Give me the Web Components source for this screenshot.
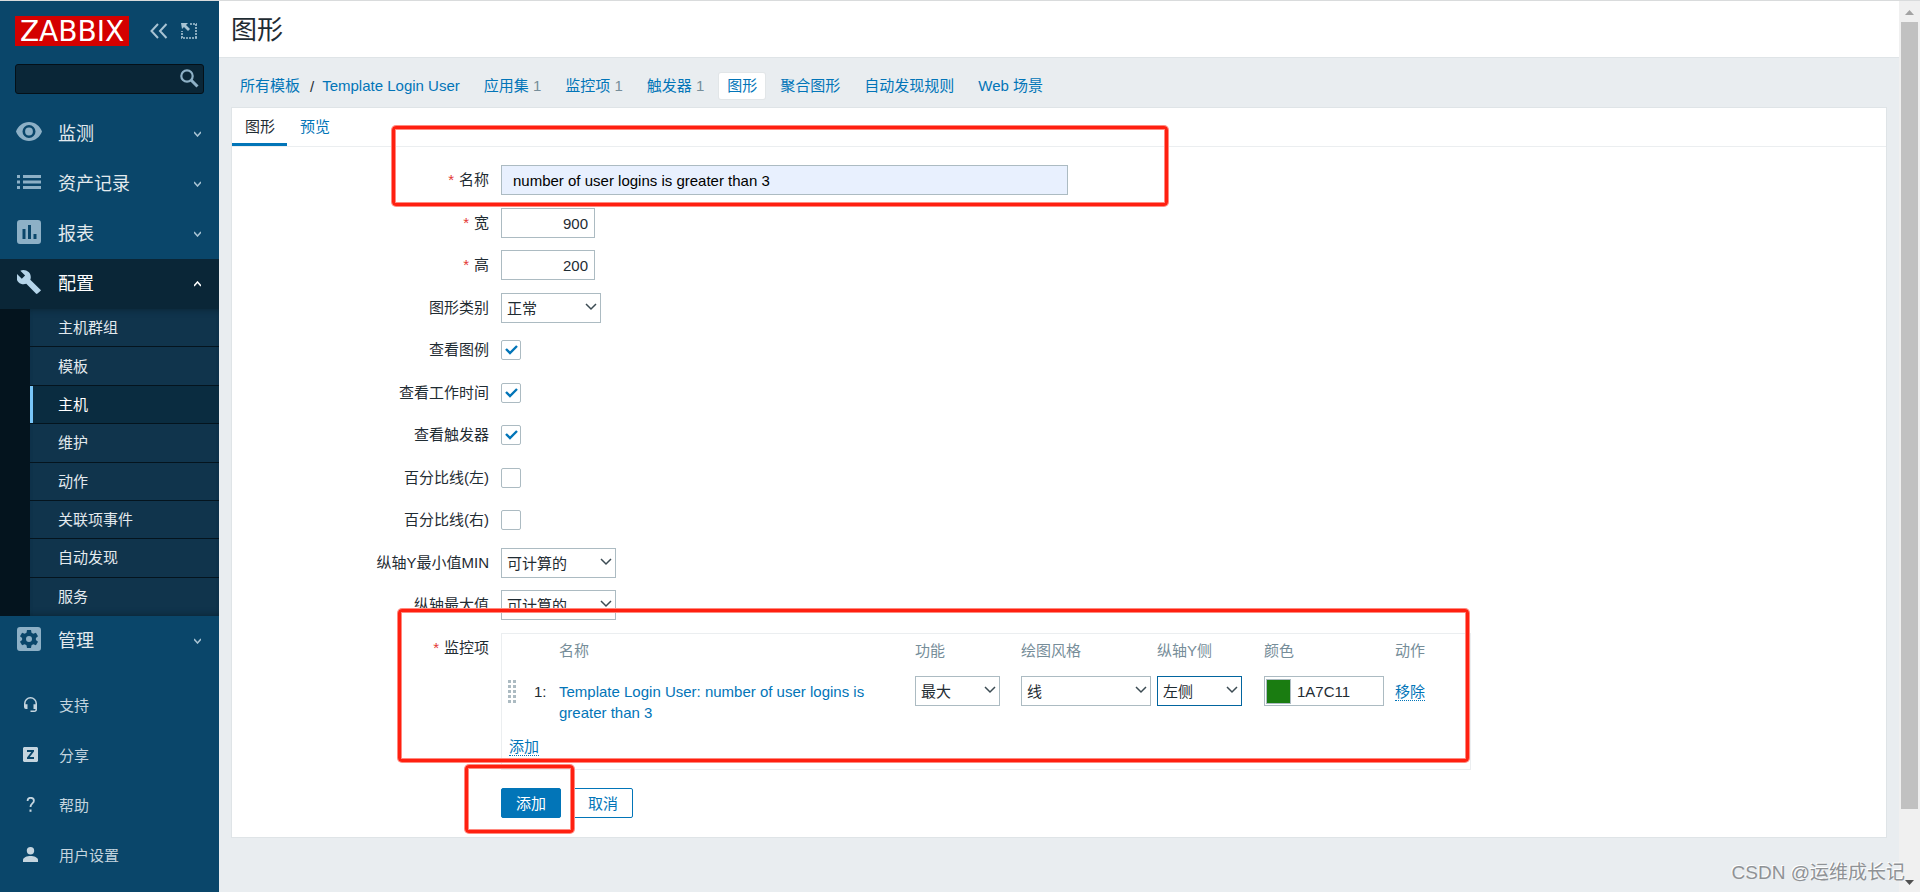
<!DOCTYPE html>
<html lang="zh-CN">
<head>
<meta charset="utf-8">
<title>图形</title>
<style>
  body { margin: 0; font-family: "Liberation Sans", "Noto Sans CJK SC", sans-serif; font-size: 15px; line-height: 21px; color: #1f2c33; background: #e9edf0; }
</style>
</head>
<body>
<app-shell>
  <side-nav slot="nav">
    <nav-section icon="eye" label="监测"></nav-section>
    <nav-section icon="list" label="资产记录"></nav-section>
    <nav-section icon="report" label="报表"></nav-section>
    <nav-section icon="wrench" label="配置" open>
      <nav-item>主机群组</nav-item>
      <nav-item>模板</nav-item>
      <nav-item selected>主机</nav-item>
      <nav-item>维护</nav-item>
      <nav-item>动作</nav-item>
      <nav-item>关联项事件</nav-item>
      <nav-item>自动发现</nav-item>
      <nav-item>服务</nav-item>
    </nav-section>
    <nav-section icon="gear" label="管理"></nav-section>
    <user-link slot="user" icon="headset">支持</user-link>
    <user-link slot="user" icon="share">分享</user-link>
    <user-link slot="user" icon="help">帮助</user-link>
    <user-link slot="user" icon="person">用户设置</user-link>
  </side-nav>

  <page-title>图形</page-title>
  <crumb-bar></crumb-bar>
  <tab-panel>
    <form-row kind="text" label="名称" value="number of user logins is greater than 3" required></form-row>
    <form-row kind="number" label="宽" value="900" required></form-row>
    <form-row kind="number" label="高" value="200" required></form-row>
    <form-row kind="select" label="图形类别" value="正常" style="--control: 100px"></form-row>
    <form-row kind="check" label="查看图例" checked></form-row>
    <form-row kind="check" label="查看工作时间" checked></form-row>
    <form-row kind="check" label="查看触发器" checked></form-row>
    <form-row kind="check" label="百分比线(左)"></form-row>
    <form-row kind="check" label="百分比线(右)"></form-row>
    <form-row kind="select" label="纵轴Y最小值MIN" value="可计算的" style="--control: 115px"></form-row>
    <form-row kind="select" label="纵轴最大值" value="可计算的" style="--control: 115px"></form-row>
    <form-row kind="slot" label="监控项" required><graph-items></graph-items></form-row>
    <form-actions></form-actions>
    <red-mark slot="marks" style="left:160px;top:18px;width:776px;height:80px"></red-mark>
    <red-mark slot="marks" style="left:166px;top:501px;width:1071px;height:153px"></red-mark>
    <red-mark slot="marks" style="left:233px;top:657px;width:109px;height:68px"></red-mark>
  </tab-panel>

  <scroll-rail slot="rail"></scroll-rail>
  <water-mark slot="rail">CSDN @运维成长记</water-mark>
</app-shell>

<script>
const icons = {
  eye: '<svg width="28" height="20" viewBox="0 0 28 20"><path fill-rule="evenodd" d="M14 0C8 0 3 4 1 9.500C3 15 8 19 14 19s11-4 13-9.500C25 4 20 0 14 0zm0 16a6.500 6.500 0 1 1 0-13 6.500 6.500 0 0 1 0 13zm0-2.600a3.900 3.900 0 1 0 0-7.800 3.900 3.900 0 0 0 0 7.800z"/></svg>',
  list: '<svg width="24" height="14" viewBox="0 0 24 14"><path d="M0 0h3v3H0zM0 5.500h3v3H0zM0 11h3v3H0zM6 0h18v3H6zM6 5.500h18v3H6zM6 11h18v3H6z"/></svg>',
  report: '<svg width="24" height="24" viewBox="0 0 24 24"><path fill-rule="evenodd" d="M3 0h18a3 3 0 0 1 3 3v18a3 3 0 0 1-3 3H3a3 3 0 0 1-3-3V3a3 3 0 0 1 3-3zm2.500 9v10h3V9zm5.500-4v14h3V5zm5.500 9v5h3v-5z"/></svg>',
  wrench: '<svg width="24" height="24" viewBox="0 0 24 24"><path d="M23.500 19.800 13.300 9.700c1-2.600.4-5.600-1.700-7.600C9.300-.1 6-.5 3.300.7l4.800 4.700-3.300 3.300L0 4c-1.300 2.700-.7 6 1.500 8.200 2.100 2.100 5.200 2.600 7.800 1.600l9.600 9.700c.5.500 1.200.5 1.600 0l2.900-2.400c.6-.4.6-1 .1-1.300z"/></svg>',
  gear: '<svg width="24" height="24" viewBox="0 0 24 24"><path fill-rule="evenodd" d="M3 0h18a3 3 0 0 1 3 3v18a3 3 0 0 1-3 3H3a3 3 0 0 1-3-3V3a3 3 0 0 1 3-3zM10 3l-.500 2.700-1.800 1L5.100 5.700 3 9.200l2.100 1.800v2L3 14.800l2.100 3.500 2.600-1 1.800 1L10 21h4l.500-2.700 1.800-1 2.600 1 2.100-3.500-2.100-1.800v-2L21 9.200l-2.100-3.500-2.600 1-1.800-1L14 3zm2 6a3 3 0 1 1 0 6 3 3 0 0 1 0-6z"/></svg>',
  headset: '<svg width="15" height="15" viewBox="0 0 15 15"><path d="M7.500 0A6.500 6.500 0 0 0 1 6.500V10a2 2 0 0 0 2 2h1.500V7.300h-2v-.8a5 5 0 0 1 10 0v.8h-2V12h2v.3c0 .8-.5 1.200-1.200 1.200H7.500V15h3.800A2.700 2.700 0 0 0 14 12.300V6.500A6.500 6.500 0 0 0 7.500 0z"/></svg>',
  share: '<svg width="15" height="15" viewBox="0 0 15 15"><path fill-rule="evenodd" d="M1 0h13l1 1v13l-1 1H1l-1-1V1zM4 3v2h4.300L4 10.500V12h7v-2H6.700L11 4.500V3z"/></svg>',
  help: '<svg width="15" height="15" viewBox="0 0 15 15"><path d="M4.600 4C4.600 2 5.800.8 7.700.8s3.200 1.100 3.200 2.900c0 2.600-3.400 2.900-3.400 6.300" fill="none" stroke="currentColor" stroke-width="1.800"/><path d="M6.500 12.500h2v2.300h-2z"/></svg>',
  person: '<svg width="15" height="15" viewBox="0 0 15 15"><circle cx="7.500" cy="3.700" r="3.700"/><path d="M0 15v-2c0-2.500 4-4 7.500-4s7.500 1.500 7.500 4v2z"/></svg>'
};
const chevron = '<svg class="chev" width="12" height="8" viewBox="0 0 12 8" aria-hidden="true"><path d="M1 1l5 5 5-5" fill="none" stroke="#3c4b53" stroke-width="1.500"/></svg>';

const controlCss = `
  *, *::before { box-sizing: border-box; }
  input, select, button { font: inherit; line-height: 21px; color: #1f2c33; margin: 0; height: 30px; border: 1px solid #acbbc2; border-radius: 0; background: #fff; padding: 0 6px; outline: 0; appearance: none; }
  .pick { display: inline-grid; align-items: center; }
  .pick > * { grid-area: 1 / 1; }
  .pick select { width: 100%; padding: 0 5px; }
  .pick .chev { justify-self: end; margin: 0 4px 2px 0; pointer-events: none; }
  a { color: #0275b8; text-decoration: none; }
  a.act { border-bottom: 1px dotted #0275b8; }
`;

function define(name, render) {
  customElements.define(name, class extends HTMLElement {
    connectedCallback() {
      if (this.shadowRoot) return;
      const t = document.createElement('template');
      t.innerHTML = render(this);
      this.attachShadow({ mode: 'open' }).append(t.content.cloneNode(true));
    }
  });
}

define('app-shell', () => `<style>
  :host { display: grid; grid-template-columns: 219px minmax(0, 1fr) 21px; min-height: 100vh; box-sizing: border-box; border-top: 1px solid #d9dbdc; position: relative; }
</style><slot name="nav"></slot><main><slot></slot></main><slot name="rail"></slot>`);

define('side-nav', () => `<style>
  :host { display: block; background: #0a466a; color: #e3eaee; padding-top: 15px; }
  .brand { display: flex; align-items: center; height: 30px; margin: 0 22px 18px 15px; }
  .logo { width: 114px; height: 30px; background: #d40000; color: #fff; font: 28px/31px "DejaVu Sans", sans-serif; text-align: center; text-decoration: none; margin-right: auto; }
  button { border: 0; background: none; padding: 0; display: flex; margin-left: 13px; }
  form { display: grid; margin: 0 15px 15px; align-items: center; }
  form > * { grid-area: 1 / 1; }
  input { box-sizing: border-box; width: 100%; height: 30px; background: #0a2637; border: 1px solid #041018; border-radius: 3px; color: #fff; font: inherit; padding: 0 32px 0 8px; outline: 0; }
  .find { justify-self: end; margin: 0 5px 2px 0; }
  .user { margin-top: 14px; }
</style>
<div class="brand"><a class="logo" href="#">ZABBIX</a>
  <button aria-label="收起"><svg width="18" height="16" viewBox="0 0 18 16" fill="none" stroke="#a8c3d3" stroke-width="2"><path d="M8 1 1.500 8 8 15M16.500 1 10 8l6.500 7"/></svg></button>
  <button aria-label="全屏"><svg width="16" height="16" viewBox="0 0 16 16"><path d="M0 0h7L5 2l4 4-2 2-4-4-2 2z" fill="#a8c3d3"/><path d="M9 1h7M15 1v14M16 15H0M1 15V8" fill="none" stroke="#a8c3d3" stroke-width="1.600" stroke-dasharray="2 1"/></svg></button>
</div>
<form role="search"><input aria-label="搜索"><button class="find" type="button" aria-label="搜索"><svg width="19" height="19" viewBox="0 0 19 19" fill="none" stroke="#8db0c6"><circle cx="7" cy="7" r="5.700" stroke-width="2.200"/><path d="M11 11l6.500 6.500" stroke-width="3"/></svg></button></form>
<nav><slot></slot></nav><div class="user"><slot name="user"></slot></div>`);

define('nav-section', el => {
  const open = el.hasAttribute('open');
  return `<style>
  :host { display: block; }
  .head { display: flex; align-items: center; height: 50px; padding: 0 18px 0 15px; color: #e3eaee; font-size: 18px; text-decoration: none; }
  .icon { width: 28px; margin-right: 15px; padding-bottom: 4px; display: flex; justify-content: center; fill: #8db0c6; }
  .chev { margin-left: auto; fill: none; stroke: #a8c3d3; stroke-width: 1.500; }
  :host([open]) .head { background: #0a2637; color: #fff; }
  :host([open]) .icon { fill: #b5d5ea; }
  :host([open]) .chev { stroke: #fff; }
  .sub { display: grid; grid-auto-rows: 1fr; height: 307px; border-left: 30px solid #04141e; box-shadow: inset 0 6px 6px -5px #0a2637, inset 0 -6px 6px -5px #0a2637; background: #10344c; }
</style><a class="head" href="#"><span class="icon">${icons[el.getAttribute('icon')]}</span>${el.getAttribute('label')}<svg class="chev" width="7" height="6" viewBox="0 0 7 6"><path d="${open ? 'M0 5l3.500-4L7 5' : 'M0 1l3.500 4L7 1'}"/></svg></a>
${open ? '<div class="sub"><slot></slot></div>' : ''}`; });

define('nav-item', () => `<style>
  :host { display: flex; align-items: stretch; border-bottom: 1px solid #04141e; }
  :host(:last-child) { border-bottom: 0; }
  a { flex: 1; display: flex; align-items: center; padding-left: 28px; color: #e3eaee; text-decoration: none; }
  :host([selected]) a { background: #0a2c40; color: #fff; border-left: 3px solid #79c6f8; padding-left: 25px; }
</style><a href="#"><slot></slot></a>`);

define('user-link', el => `<style>
  :host { display: block; }
  a { display: flex; align-items: center; height: 50px; padding-left: 23px; color: #c5d5df; text-decoration: none; }
  svg { fill: currentColor; margin: 0 21px 2px 0; }
</style><a href="#">${icons[el.getAttribute('icon')]}<slot></slot></a>`);

define('page-title', () => `<style>
  :host { display: block; background: #fff; border-bottom: 1px solid #dfe4e7; }
  h1 { margin: 0; padding: 3px 12px 0; font-size: 26px; line-height: 53px; font-weight: 400; }
</style><h1><slot></slot></h1>`);

define('crumb-bar', () => `<style>
  :host { display: flex; align-items: center; padding: 15px 13px 8px; height: 26px; white-space: pre; }
  a { color: #0275b8; text-decoration: none; padding: 0 8px; line-height: 26px; }
  i { font-style: normal; color: #768d99; }
  span { padding-left: 2px; }
  a + a { margin-left: 8px; }
  .on { background: #fff; border-radius: 2px; box-shadow: 0 0 0 1px #e2e6e8; }
  a + .on, .on + a { margin-left: 7px; }
</style><a href="#">所有模板</a><span>/</span><a href="#">Template Login User</a><a href="#">应用集 <i>1</i></a><a href="#">监控项 <i>1</i></a><a href="#">触发器 <i>1</i></a><a class="on" href="#">图形</a><a href="#">聚合图形</a><a href="#">自动发现规则</a><a href="#">Web 场景</a>`);

define('tab-panel', () => `<style>
  :host { display: block; position: relative; margin: 0 12px; background: #fff; border: 1px solid #dfe4e7; }
  nav { display: flex; height: 38px; border-bottom: 1px solid #ebeef0; }
  a { box-sizing: border-box; height: 38px; padding: 8px 12px 8px 13px; color: #0275b8; text-decoration: none; }
  .on { color: #1f2c33; border-bottom: 3px solid #0275b8; }
  form { padding: 18px 0 19px; }
</style><nav><a class="on" href="#">图形</a><a href="#">预览</a></nav><form><slot></slot></form><slot name="marks"></slot>`);

define('form-row', el => {
  const v = el.getAttribute('value') || '';
  const kind = el.getAttribute('kind');
  const body = {
    text: `<input id="c" class="wide" value="${v}">`,
    number: `<input id="c" class="num" value="${v}">`,
    select: `<span class="pick"><select id="c"><option>${v}</option></select>${chevron}</span>`,
    check: `<span class="box"><input id="c" type="checkbox" ${el.hasAttribute('checked') ? 'checked' : ''}><svg width="13" height="10" viewBox="0 0 13 10"><path d="M1 4l4 4 7-7" fill="none" stroke="#0275b8" stroke-width="2.400"/></svg></span>`,
    slot: '<slot></slot>'
  }[kind];
  const tag = kind === 'slot' ? 'span' : 'label';
  return `<style>${controlCss}
  :host { display: grid; grid-template-columns: 257px minmax(0, 1fr); column-gap: 12px; align-items: start; margin-bottom: 12px; }
  :host(:nth-child(odd)) { margin-bottom: 13px; }
  .label { text-align: right; line-height: 30px; height: 30px; }
  .req::before { content: "*"; color: #e33734; margin-right: 5px; }
  .cell { min-height: 30px; display: flex; align-items: center; }
  .wide { width: 567px; max-width: 100%; padding: 0 11px; background: #e8f0fe; color: #000; }
  .num { width: 94px; text-align: right; }
  .pick { width: var(--control); }
  .box { display: grid; place-items: center; }
  .box > * { grid-area: 1 / 1; }
  .box input { width: 20px; height: 20px; border-radius: 2px; padding: 0; }
  .box svg { display: none; pointer-events: none; }
  .box input:checked + svg { display: block; }
</style><${tag} class="label ${el.hasAttribute('required') ? 'req' : ''}" ${kind === 'slot' ? '' : 'for="c"'}>${el.getAttribute('label')}</${tag}><div class="cell">${body}</div>`; });

const pick = (label, value, cls) => `<span class="pick ${cls}"><select aria-label="${label}"><option>${value}</option></select>${chevron}</span>`;
define('graph-items', () => `<style>${controlCss}
  :host { display: block; box-sizing: border-box; width: 970px; border: 1px solid #ebeef0; }
  table { table-layout: fixed; width: 100%; border-collapse: collapse; }
  th { font-weight: 400; text-align: left; color: #768d99; height: 33px; padding: 0; }
  td { vertical-align: top; padding: 9px 0 0; height: 47px; }
  .line { padding-top: 14px; }
  .no { padding-left: 4px; }
  .grip { padding: 13px 0 0 6px; }
  .grip svg { display: block; }
  .more { height: 46px; padding: 13px 0 0 7px; }
  .w85 { width: 85px; } .w130 { width: 130px; }
  .focus select { border-color: #02659f; }
  .color { display: flex; align-items: center; width: 120px; height: 30px; border: 1px solid #acbbc2; padding-left: 1px; }
  .color button { width: 25px; height: 25px; background: #1a7c11; padding: 0; flex: none; }
  .color input { border: 0; height: 28px; width: 100%; min-width: 0; }
</style><table>
<colgroup><col style="width:28px"><col style="width:29px"><col style="width:356px"><col style="width:106px"><col style="width:136px"><col style="width:107px"><col style="width:131px"><col></colgroup>
<thead><tr><th></th><th></th><th>名称</th><th>功能</th><th>绘图风格</th><th>纵轴Y侧</th><th>颜色</th><th>动作</th></tr></thead>
<tbody><tr>
<td class="grip"><svg width="8" height="23" viewBox="0 0 8 23" fill="#acbbc2"><path d="M0 0h3v3H0zM5 0h3v3H5zM0 5h3v3H0zM5 5h3v3H5zM0 10h3v3H0zM5 10h3v3H5zM0 15h3v3H0zM5 15h3v3H5zM0 20h3v3H0zM5 20h3v3H5z"/></svg></td>
<td class="line no">1:</td><td class="line"><a href="#">Template Login User: number of user logins is greater than 3</a></td>
<td>${pick('功能', '最大', 'w85')}</td><td>${pick('绘图风格', '线', 'w130')}</td><td>${pick('纵轴Y侧', '左侧', 'w85 focus')}</td>
<td><span class="color"><button type="button" aria-label="选择颜色"></button><input aria-label="颜色" value="1A7C11"></span></td>
<td class="line"><a class="act" href="#">移除</a></td></tr>
<tr><td class="more" colspan="8"><a class="act" href="#">添加</a></td></tr></tbody></table>`);

define('form-actions', () => `<style>${controlCss}
  :host { display: flex; gap: 12px; padding: 6px 0 0 269px; }
  button { width: 60px; padding: 0; border: 1px solid #0275b8; border-radius: 2px; color: #0275b8; }
  .main { background: #0275b8; color: #fff; }
</style><button class="main" type="button">添加</button><button type="button">取消</button>`);

define('red-mark', () => `<style>
  :host { position: absolute; box-sizing: border-box; border: 3px solid #ff2010; border-radius: 4px; box-shadow: 0 0 0 1px #ff8a80, inset 0 0 0 1px #ff8a80; pointer-events: none; }
</style>`);

define('scroll-rail', () => `<style>
  :host { display: flex; flex-direction: column; align-items: center; background: #f0f0f0; padding: 9px 0 7px; box-sizing: border-box; }
  svg { flex: none; }
  .track { flex: 1; width: 17px; margin: 7px 0 5px; display: grid; grid-template-rows: 12fr 1fr; }
  .thumb { background: #c1c1c1; }
</style><svg width="9" height="5" viewBox="0 0 9 5"><path d="M0 5 4.500 0 9 5z" fill="#a3a3a3"/></svg><div class="track"><div class="thumb"></div></div><svg width="9" height="5" viewBox="0 0 9 5"><path d="M0 0h9L4.500 5z" fill="#505050"/></svg>`);

define('water-mark', () => `<style>
  :host { position: absolute; right: 15px; bottom: 4px; font-size: 19px; line-height: 30px; color: #8f9295; text-shadow: -1px -1px 0 #fff; white-space: nowrap; pointer-events: none; }
</style><slot></slot>`);
</script>
</body>
</html>
